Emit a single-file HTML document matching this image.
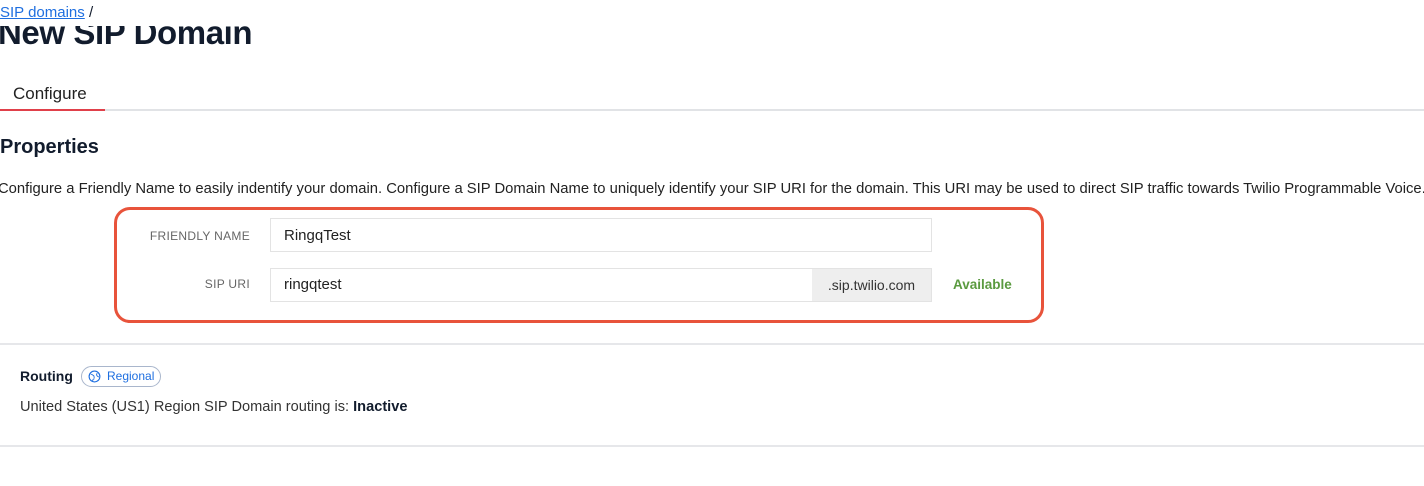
<!DOCTYPE html>
<html><head><style>
body{margin:0;width:1424px;height:486px;background:#fff;font-family:"Liberation Sans",sans-serif;position:relative;overflow:hidden;color:#121c2d}
.a{position:absolute;white-space:nowrap}
</style></head><body>
<div class="a" style="left:-2px;top:14px;font-size:33px;font-weight:bold;color:#121c2d;letter-spacing:-0.4px">New SIP Domain</div>
<div class="a" style="left:0;top:0;width:400px;height:26px;background:#fff"></div>
<div class="a" style="left:0;top:4px;font-size:15px;color:#121c2d"><span style="color:#1f6fe0;text-decoration:underline">SIP domains</span> /</div>
<div class="a" style="left:13px;top:84px;font-size:17px;color:#222">Configure</div>
<div class="a" style="left:0;top:109px;width:1424px;height:2px;background:#e1e3e6"></div>
<div class="a" style="left:0;top:109px;width:105px;height:2px;background:#e0404a"></div>
<div class="a" style="left:0;top:136px;font-size:20px;font-weight:bold">Properties</div>
<div class="a" style="left:-2px;top:181px;font-size:14.8px;color:#222">Configure a Friendly Name to easily indentify your domain. Configure a SIP Domain Name to uniquely identify your SIP URI for the domain. This URI may be used to direct SIP traffic towards Twilio Programmable Voice.</div>
<div class="a" style="left:114px;top:207px;width:924px;height:110px;border:3px solid #e8533b;border-radius:16px"></div>
<div class="a" style="left:100px;top:229px;width:150px;text-align:right;font-size:12px;color:#666;letter-spacing:0.3px">FRIENDLY NAME</div>
<div class="a" style="left:270px;top:218px;width:660px;height:32px;border:1px solid #e3e3e3"></div>
<div class="a" style="left:284px;top:227px;font-size:15px;color:#222">RingqTest</div>
<div class="a" style="left:100px;top:277px;width:150px;text-align:right;font-size:12px;color:#666;letter-spacing:0.3px">SIP URI</div>
<div class="a" style="left:270px;top:268px;width:660px;height:32px;border:1px solid #e3e3e3"></div>
<div class="a" style="left:812px;top:269px;width:119px;height:32px;background:#eeeeee;font-size:14px;color:#333;line-height:32px;text-align:center">.sip.twilio.com</div>
<div class="a" style="left:284px;top:276px;font-size:15px;color:#222">ringqtest</div>
<div class="a" style="left:953px;top:277px;font-size:13.5px;font-weight:bold;color:#5a9a3f">Available</div>
<div class="a" style="left:0;top:343px;width:1424px;height:2px;background:#e6e7ea"></div>
<div class="a" style="left:20px;top:368px;font-size:14px;font-weight:bold">Routing</div>
<div class="a" style="left:81px;top:366px;width:78px;height:19px;border:1px solid #a9b6cc;border-radius:11px;font-size:12px;color:#1f6fe0;line-height:19px">
<svg style="position:absolute;left:6px;top:3px" width="13" height="13" viewBox="0 0 14 14"><circle cx="7" cy="7" r="5.8" fill="none" stroke="#1f6fe0" stroke-width="1.2"/><path d="M3 4.5c1.5 0 2 1 3 1.5s0 2 1 2.5M10 3.5c-1 1-1 2 0 3s1.5 1 2 1M5 12c0-2 1-2.5 2-2.5" fill="none" stroke="#1f6fe0" stroke-width="1"/></svg>
<span style="position:absolute;left:25px">Regional</span></div>
<div class="a" style="left:20px;top:399px;font-size:14.6px;color:#333">United States (US1) Region SIP Domain routing is: <b style="color:#121c2d">Inactive</b></div>
<div class="a" style="left:0;top:445px;width:1424px;height:2px;background:#e6e7ea"></div>
</body></html>
